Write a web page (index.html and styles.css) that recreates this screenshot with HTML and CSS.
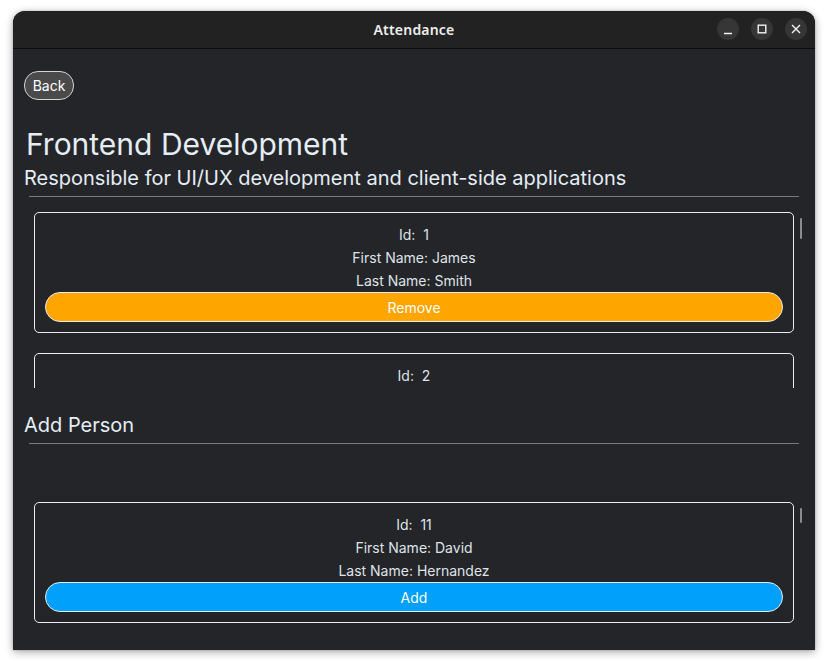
FILE: index.html
```html
<!DOCTYPE html>
<html>
<head>
<meta charset="utf-8">
<link rel="stylesheet" href="styles.css">
</head>
<body>
<div class="window">
  <div class="titlebar">
    <div class="spacer"></div>
    <span class="wtitle">Attendance</span>
    <div class="controls">
      <span class="ctl"><svg width="22" height="22" viewBox="0 0 22 22"><path d="M7 15.5h8" stroke="#f2f2f2" stroke-width="1.4" fill="none"/></svg></span>
      <span class="ctl"><svg width="22" height="22" viewBox="0 0 22 22"><rect x="7.2" y="7.2" width="7.6" height="7.6" stroke="#f2f2f2" stroke-width="1.4" fill="none"/></svg></span>
      <span class="ctl"><svg width="22" height="22" viewBox="0 0 22 22"><path d="M7 7l8 8M15 7l-8 8" stroke="#f2f2f2" stroke-width="1.4" fill="none"/></svg></span>
    </div>
  </div>
  <div class="content">
    <button class="back">Back</button>
    <h1 class="heading">Frontend Development</h1>
    <p class="subtitle">Responsible for UI/UX development and client-side applications</p>
    <hr class="rule">
    <div class="list list-top">
      <div class="viewport">
        <div class="card">
          <div class="line">Id:&nbsp; 1</div>
          <div class="line">First Name: James</div>
          <div class="line">Last Name: Smith</div>
          <button class="action remove">Remove</button>
        </div>
        <div class="card card-clipped">
          <div class="line">Id:&nbsp; 2</div>
        </div>
      </div>
      <div class="scrollbar sb-top"></div>
    </div>
    <h2 class="section">Add Person</h2>
    <hr class="rule">
    <div class="list list-bottom">
      <div class="viewport">
        <div class="card">
          <div class="line">Id:&nbsp; 11</div>
          <div class="line">First Name: David</div>
          <div class="line">Last Name: Hernandez</div>
          <button class="action add">Add</button>
        </div>
      </div>
      <div class="scrollbar sb-bottom"></div>
    </div>
  </div>
</div>
</body>
</html>
```
FILE: styles.css
```css
* { box-sizing: border-box; }
html, body { margin: 0; padding: 0; background: #ffffff; }
body { padding: 11px 0 0 13px; min-height: 666px; }

.window {
  width: 802px;
  height: 639px;
  border-radius: 12px 12px 0 0;
  background: #242529;
  box-shadow: 0 2px 9px rgba(0,0,0,0.35), 0 0 2px rgba(0,0,0,0.25);
  overflow: hidden;
  display: flex;
  flex-direction: column;
  font-family: "Inter", "Noto Sans", sans-serif;
}

.titlebar {
  height: 38px;
  flex: 0 0 38px;
  background: #222222;
  border-bottom: 1px solid #0c0c0c;
  display: grid;
  grid-template-columns: 1fr auto 1fr;
  align-items: center;
  padding: 0 8px 0 8px;
}
.wtitle {
  font-family: "Noto Sans", "DejaVu Sans", sans-serif;
  font-weight: 600;
  font-size: 14px;
  color: #ededed;
  letter-spacing: 0.2px;
  margin-top: -1px;
}
.controls {
  display: flex;
  justify-content: flex-end;
  gap: 12px;
  margin-top: -1px;
}
.ctl {
  width: 22px;
  height: 22px;
  border-radius: 50%;
  background: #363636;
  display: flex;
}

.content {
  flex: 1;
  padding: 22px 16px 0 11px;
  display: flex;
  flex-direction: column;
  align-items: stretch;
  overflow: hidden;
}

.back {
  align-self: flex-start;
  width: 50px;
  height: 29px;
  border-radius: 14px;
  border: 1px solid #d4d4d4;
  background: #4a4a4b;
  color: #ffffff;
  font-family: "Inter", sans-serif;
  font-size: 14px;
  padding: 0;
}

.heading {
  margin: 26px 0 0 2px;
  font-size: 30px;
  line-height: 36px;
  font-weight: 400;
  color: #e5edf5;
}
.subtitle {
  margin: 4px 0 0 0;
  font-size: 20px;
  line-height: 24px;
  color: #e5edf5;
}
.rule {
  margin: 6px 0 0 5px;
  border: 0;
  height: 1px;
  background: #7a7a7c;
}

.list {
  position: relative;
  margin: 8px -5px 0 5px;
}
.list-top { height: 183px; }
.list-bottom { margin-top: 51px; flex: 1; }
.viewport {
  height: 100%;
  overflow: hidden;
  padding-top: 7px;
}
.scrollbar {
  position: absolute;
  right: 2px;
  top: 13px;
  width: 2px;
  background: #8c8c8e;
  border-radius: 1px;
}
.sb-top { height: 21px; }
.sb-bottom { height: 15px; }

.card {
  margin: 0 10px 20px 5px;
  border: 1px solid #ececec;
  border-radius: 5px;
  padding: 10px 10px 10px;
  display: flex;
  flex-direction: column;
  align-items: stretch;
  text-align: center;
}
.card-clipped { min-height: 121px; }
.line {
  font-size: 14px;
  line-height: 23px;
  color: #dfe3e8;
}
.action {
  margin-top: 0;
  height: 30px;
  border-radius: 15px;
  border: 1px solid #e4edf2;
  color: #ffffff;
  font-family: "Inter", sans-serif;
  font-size: 14px;
  padding: 0;
}
.remove { background: #ffa500; }
.add { background: #00a0fb; }

.section {
  margin: 25px 0 0 0;
  font-size: 20px;
  line-height: 24px;
  font-weight: 400;
  color: #e5edf5;
}
```
